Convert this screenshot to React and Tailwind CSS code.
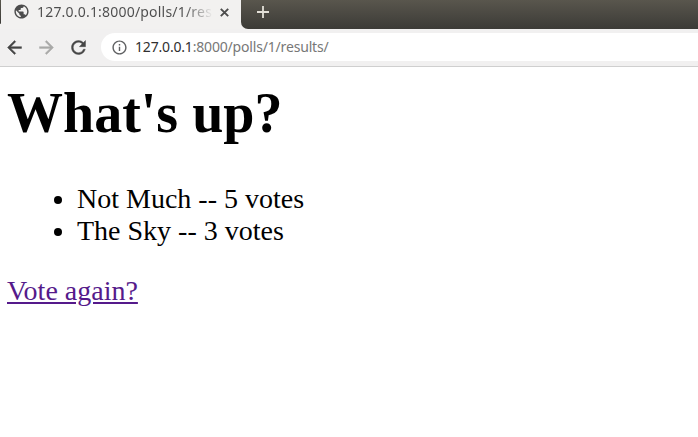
import React from "react";
import { MdInfoOutline, MdPublic } from "react-icons/md";

function NavIcon({ d, className }) {
  return (
    <svg viewBox="0 0 24 24" className={className} fill="currentColor" stroke="currentColor" strokeWidth="0.5">
      <path d={d} />
    </svg>
  );
}

const BACK = "M20 11H7.83l5.59-5.59L12 4l-8 8 8 8 1.41-1.41L7.83 13H20v-2z";
const FORWARD = "M12 4l-1.41 1.41L16.17 11H4v2h12.17l-5.58 5.59L12 20l8-8z";
const RELOAD =
  "M17.65 6.35A7.958 7.958 0 0012 4c-4.42 0-7.99 3.58-7.99 8s3.57 8 7.99 8c3.73 0 6.84-2.55 7.73-6h-2.08A5.99 5.99 0 0112 18c-3.31 0-6-2.69-6-6s2.69-6 6-6c1.66 0 3.14.69 4.22 1.78L13 11h7V4l-2.35 2.35z";

function TabStrip() {
  return (
    <div className="flex h-[29px] bg-[#f2f1f0]">
      <div className="h-6 w-px rounded-br-sm bg-linear-to-b from-[#59564d] to-[#3c3b37]" />
      <div className="flex h-[29px] w-[240px] items-start pl-3">
        <MdPublic className="mt-[3px] size-[17px] shrink-0 text-[#4c4c4c]" />
        <div className="ml-[7px] h-6 w-[176px] whitespace-nowrap bg-linear-to-r from-[#4c4c4c] from-84% to-transparent bg-clip-text font-['Noto_Sans',sans-serif] text-[14px] leading-6 tracking-[0.2px] text-transparent">
          127.0.0.1:8000/polls/1/res
        </div>
        <svg className="ml-[7px] mt-2 size-[9px] shrink-0" viewBox="0 0 9 9" stroke="#4c4c4c" strokeWidth="1.9">
          <path d="M.8.8l7.4 7.4M8.2.8L.8 8.2" />
        </svg>
      </div>
      <div className="flex-1">
        <div className="h-[29px] rounded-bl-[7px] bg-linear-to-b from-[#59564d] to-[#3c3b37] pl-4 pt-1.5">
          <svg className="size-3" viewBox="0 0 12 12" stroke="#e3e0d8" strokeWidth="1.8">
            <path d="M6 0v12M0 6h12" />
          </svg>
        </div>
      </div>
    </div>
  );
}

function Toolbar() {
  return (
    <div className="flex h-[38px] items-center border-b border-[#cfcfcf] bg-[#f1f0f0] pb-px pl-1">
      <NavIcon d={BACK} className="size-[21px] shrink-0 text-[#454545]" />
      <NavIcon d={FORWARD} className="ml-[11px] size-[21px] shrink-0 text-[#a9a9a8]" />
      <NavIcon d={RELOAD} className="ml-[11px] size-[21px] shrink-0 text-[#454545]" />
      <div className="ml-3 flex h-7 flex-1 items-center rounded-l-full bg-white pl-[9px]">
        <MdInfoOutline className="ml-px size-[17px] shrink-0 text-[#5f6062]" />
        <div className="ml-[7px] whitespace-nowrap font-['Noto_Sans',sans-serif] text-[14px] leading-7 tracking-[-0.18px] text-[#777]">
          <span className="text-[#303030]">127.0.0.1</span>:8000/polls/1/results/
        </div>
      </div>
    </div>
  );
}

export default function App() {
  return (
    <div className="h-[437px] w-[698px] overflow-hidden bg-white">
      <TabStrip />
      <Toolbar />
      <main className="px-[7px] pt-[14px] font-['Liberation_Serif',serif] text-[28px] leading-8 text-black">
        <h1 className="text-[56px] font-bold leading-[64px]">What's up?</h1>
        <ul className="mt-[38px] list-disc pl-[70px]">
          <li>Not Much -- 5 votes</li>
          <li>The Sky -- 3 votes</li>
        </ul>
        <a href="#" className="mt-7 inline-block text-[#551a8b] underline decoration-2 underline-offset-2">Vote again?</a>
      </main>
    </div>
  );
}
